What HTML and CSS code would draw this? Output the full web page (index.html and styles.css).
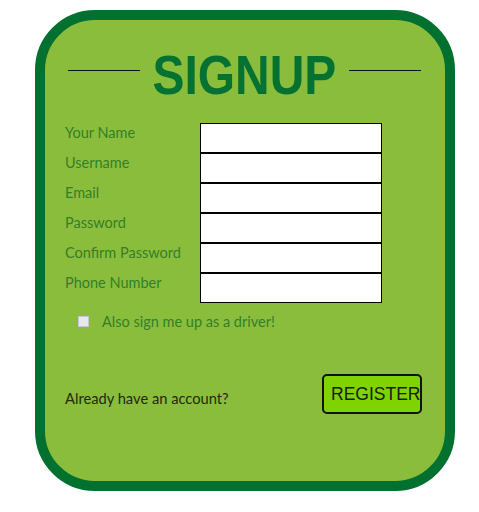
FILE: index.html
```html
<!DOCTYPE html>
<html>
<head>
<meta charset="utf-8">
<link rel="stylesheet" href="styles.css">
</head>
<body>
<div class="card">
  <div class="title-row">
    <span class="rule"></span>
    <h1 class="title"><span class="title-text">SIGNUP</span></h1>
    <span class="rule"></span>
  </div>
  <form class="form">
    <div class="fields">
      <label class="row"><span class="label">Your Name</span><input class="input" type="text"></label>
      <label class="row"><span class="label">Username</span><input class="input" type="text"></label>
      <label class="row"><span class="label">Email</span><input class="input" type="text"></label>
      <label class="row"><span class="label">Password</span><input class="input" type="password"></label>
      <label class="row"><span class="label">Confirm Password</span><input class="input" type="password"></label>
      <label class="row"><span class="label">Phone Number</span><input class="input" type="text"></label>
    </div>
    <label class="check-row"><span class="checkbox"></span><span class="check-label">Also sign me up as a driver!</span></label>
    <div class="bottom-row">
      <span class="account">Already have an account?</span>
      <button class="register" type="button">REGISTER</button>
    </div>
  </form>
</div>
</body>
</html>
```
FILE: styles.css
```css
html, body {
  margin: 0;
  padding: 0;
  background: #ffffff;
}
.card {
  box-sizing: border-box;
  width: 420px;
  height: 481px;
  margin: 10px 0 0 35px;
  border: 10px solid #02702f;
  border-radius: 60px;
  background: #8bbd3c;
  display: flex;
  flex-direction: column;
}
.title-row {
  display: flex;
  align-items: center;
  padding: 0 24px 0 23px;
  margin-top: 27px;
  height: 56px;
}
.rule {
  flex: 1;
  height: 1px;
  margin-bottom: 10px;
  background: #111;
}
.title {
  display: flex;
  justify-content: center;
  width: 184px;
  margin: 0 13px 0 12px;
  font-family: "Liberation Sans", Arial, sans-serif;
  font-weight: bold;
  font-size: 56px;
  line-height: 56px;
  color: #057231;
}
.title-text {
  display: inline-block;
  transform: scaleX(0.856);
  white-space: nowrap;
}
.form {
  display: flex;
  flex-direction: column;
  padding: 0 0 0 20px;
  margin-top: 20px;
}
.fields {
  display: flex;
  flex-direction: column;
}
.row {
  display: flex;
  align-items: flex-start;
  height: 30px;
}
.label {
  width: 135px;
  font-family: Lato, "Open Sans", sans-serif;
  font-size: 14.5px;
  line-height: 20px;
  color: #337f28;
}
.input {
  box-sizing: border-box;
  width: 182px;
  height: 30px;
  margin: 0;
  padding: 0 4px;
  border: 1px solid #000;
  background: #fff;
  outline: none;
}
.check-row {
  display: flex;
  align-items: center;
  margin: 9px 0 0 13px;
  height: 18px;
}
.checkbox {
  box-sizing: border-box;
  width: 11px;
  height: 11px;
  background: #e8e6ee;
  border: 1px solid #c9c6d2;
}
.check-label {
  margin-left: 13px;
  font-family: Lato, "Open Sans", sans-serif;
  font-size: 14.5px;
  color: #337f28;
}
.bottom-row {
  display: flex;
  justify-content: space-between;
  align-items: flex-start;
  margin-top: 44px;
  padding-right: 23px;
}
.account {
  margin-top: 15px;
  font-family: Lato, "Open Sans", sans-serif;
  font-size: 14.7px;
  color: #1e2a10;
}
.register {
  box-sizing: border-box;
  width: 100px;
  height: 40px;
  padding: 0 0 0 7px;
  text-align: left;
  border: 2px solid #111;
  border-radius: 5px;
  background: #7fd300;
  font-family: "Liberation Sans", Arial, sans-serif;
  font-size: 17.5px;
  color: #1a1a1a;
  white-space: nowrap;
}
```
